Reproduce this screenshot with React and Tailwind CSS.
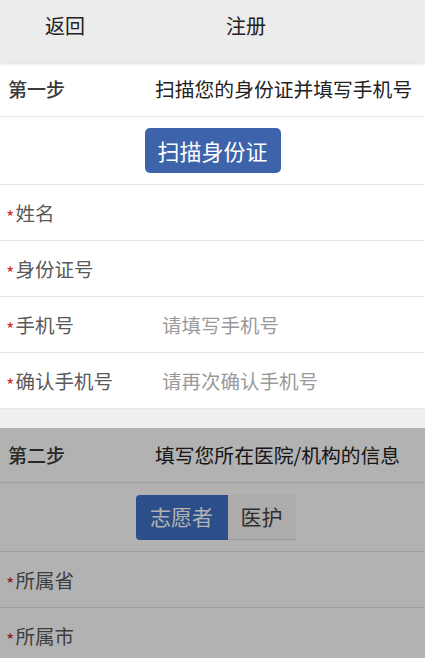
import React from "react";

const font = { fontFamily: '"Noto Sans CJK SC", "Noto Sans", sans-serif' };

const Field = ({ label, placeholder }) => (
  <div className="flex items-center h-14 border-b border-[#e6e6e6] bg-white">
    <div className="w-[162px] flex items-center pl-[6px]">
      <span className="text-[#d0312d] text-[18px] leading-none translate-y-[3px] mr-[1px]">*</span>
      <span className="text-[19.5px] text-[#595959]">{label}</span>
    </div>
    {placeholder && (
      <span className="text-[19.5px] text-[#9a9a9a]">{placeholder}</span>
    )}
  </div>
);

const StepRow = ({ step, desc }) => (
  <div className="flex items-center h-[55px] pl-2 border-b border-[#e6e6e6] bg-white">
    <span className="w-[147px] text-[19px] font-medium text-[#3a3a3a]">{step}</span>
    <span className="text-[19.8px] text-[#222] whitespace-nowrap">{desc}</span>
  </div>
);

export default function App() {
  return (
    <div className="w-[425px] h-[658px] overflow-hidden bg-white" style={font}>
      <div className="relative z-10 flex items-center h-[62px] pb-[10px] bg-[#ececec] shadow-[0_2px_3px_rgba(0,0,0,0.12)] text-[20px] text-[#222]">
        <span className="pl-[45px]">返回</span>
        <span className="ml-[141px]">注册</span>
      </div>

      <StepRow step="第一步" desc="扫描您的身份证并填写手机号" />
      <div className="flex items-center justify-center h-[68px] border-b border-[#e6e6e6]">
        <button className="w-[136px] h-[45px] rounded-[5px] bg-[#3d64aa] text-white text-[22px]">
          扫描身份证
        </button>
      </div>
      <Field label="姓名" />
      <Field label="身份证号" />
      <Field label="手机号" placeholder="请填写手机号" />
      <Field label="确认手机号" placeholder="请再次确认手机号" />

      <div className="h-[19px] bg-[#efefef]" />

      <div className="relative">
        <StepRow step="第二步" desc="填写您所在医院/机构的信息" />
        <div className="flex items-center justify-center h-[69px] border-b border-[#e6e6e6] bg-white">
          <div className="flex h-[45px] ml-[6px]">
            <span className="flex items-center justify-center w-[92px] bg-[#3f70c4] text-white text-[21px] rounded-l-[4px]">
              志愿者
            </span>
            <span className="flex items-center justify-center w-[68px] bg-[#f7f7f7] border-b border-[#ddd] text-[#444] text-[21px]">
              医护
            </span>
          </div>
        </div>
        <Field label="所属省" />
        <Field label="所属市" />
        <div className="absolute inset-0 bg-black/30" />
      </div>
    </div>
  );
}
